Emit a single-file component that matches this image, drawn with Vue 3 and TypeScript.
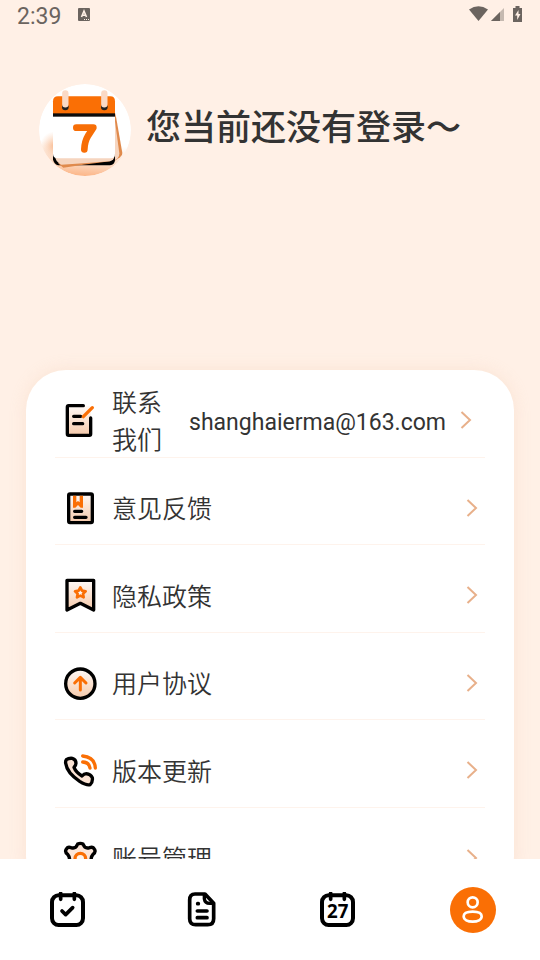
<script setup lang="ts">
import { ref } from 'vue'

interface MenuItem {
  key: string
  label: string
  value?: string
}

const menu: MenuItem[] = [
  { key: 'contact', label: '联系我们', value: 'shanghaierma@163.com' },
  { key: 'feedback', label: '意见反馈' },
  { key: 'privacy', label: '隐私政策' },
  { key: 'terms', label: '用户协议' },
  { key: 'update', label: '版本更新' },
  { key: 'account', label: '账号管理' },
]

const tabs = [
  { key: 'todo', name: '待办' },
  { key: 'notes', name: '笔记' },
  { key: 'calendar', name: '日历' },
  { key: 'me', name: '我的' },
]

const active = ref('me')
</script>

<template>
  <div class="screen">
    <header class="status">
      <span class="time">2:39</span>
      <svg class="badge" viewBox="0 0 12 13" aria-hidden="true">
        <rect width="12" height="13" rx="1" fill="#6b645f" />
        <path d="M3.500 9 6 3l2.500 6M4.300 7.200h3.400" fill="none" stroke="#fff0e6" stroke-width="1.600" />
        <path d="M6 11.500h1M8 11.500h1M10 11.500h1" stroke="#fff0e6" stroke-width="1" />
      </svg>
      <svg class="signals" viewBox="0 0 54 16" aria-hidden="true">
        <path d="M0 3.500Q9.500-3.200 19 3.500L9.500 15Z" fill="#6b645f" />
        <path d="M22 15 35 2v13Z" fill="#c5b9b0" />
        <path d="M22 15 31 6v9Z" fill="#6b645f" />
        <path d="M44 2h2.500V0h4v2H53v14h-9Z" fill="#6b645f" />
        <path d="M49.500 4 46 9.500h2.200V14L51.500 8h-2Z" fill="#fff0e6" />
      </svg>
    </header>

    <main class="content">
      <section class="profile">
        <svg class="avatar" viewBox="27 26 276 276" aria-hidden="true">
          <defs>
            <linearGradient id="av-bg" x1="0.550" y1="0" x2="0.480" y2="1">
              <stop offset="0" stop-color="#fff" />
              <stop offset="0.650" stop-color="#fff" />
              <stop offset="0.850" stop-color="#fcdcc6" />
              <stop offset="1" stop-color="#fcb688" />
            </linearGradient>
            <radialGradient id="av-side" cx="74" cy="212" r="44" gradientUnits="userSpaceOnUse">
              <stop offset="0" stop-color="#f9b98e" />
              <stop offset="1" stop-color="#fbd0b2" stop-opacity="0" />
            </radialGradient>
            <clipPath id="av-clip"><circle cx="165" cy="164" r="138" /></clipPath>
          </defs>
          <g clip-path="url(#av-clip)">
            <circle cx="165" cy="164" r="138" fill="url(#av-bg)" />
            <circle cx="74" cy="212" r="44" fill="url(#av-side)" />
          </g>
          <path d="M256 112 277 233Q278 240 270 246L246 262Z" fill="#e08a4c" />
          <path d="M252 116 268 234Q269 243 262 250L240 262Z" fill="#f6d5bf" />
          <path d="M69 236V252Q71 266 84 270H240Q254 268 255 254V236Z" fill="#000" />
          <path d="M84 264 100 277 160 268 240 258 252 246Z" fill="#e08a4c" />
          <path d="M74 240Q76 260 94 268L160 264 240 258Q252 256 254 240Z" fill="#f6d5bf" />
          <path d="M69 110H255V236Q255 249 242 249H84Q69 249 69 236Z" fill="#fff" />
          <path d="M69 116V78Q69 63 84 63H241Q255 63 255 78V116Z" fill="#fa6f05" />
          <rect x="69" y="114" width="186" height="10" fill="#0c0c0c" />
          <circle cx="106" cy="95" r="10" fill="#222" />
          <circle cx="223" cy="95" r="10" fill="#222" />
          <path d="M106 54V87M223 54V87" stroke="#fbd9c5" stroke-width="19" stroke-linecap="round" />
          <path d="M139 157H190L175 180Q164 198 163 222" fill="none" stroke="#f76e06" stroke-width="20" stroke-linecap="round" stroke-linejoin="round" />
        </svg>
        <h1 class="title">您当前还没有登录～</h1>
      </section>

      <nav class="card" aria-label="设置">
        <svg class="defs" aria-hidden="true">
          <defs>
            <linearGradient id="peach" x1="0" y1="0" x2="0" y2="1">
              <stop offset="0" stop-color="#fffaf7" />
              <stop offset="1" stop-color="#f5c9aa" />
            </linearGradient>
          </defs>
        </svg>
        <a v-for="item in menu" :key="item.key" href="#" class="row" :class="{ detailed: item.value }">
          <svg class="icon" viewBox="0 0 108 108" aria-hidden="true">
            <g fill="none" stroke="#000" stroke-width="10" stroke-linecap="round" stroke-linejoin="round">
              <template v-if="item.key === 'contact'">
                <rect x="16" y="11" width="70" height="89" rx="4" fill="url(#peach)" stroke="none" />
                <path d="M64 11H20Q16 11 16 15V96Q16 100 20 100H82Q86 100 86 96V48" />
                <path d="M35 43H56M35 65H62" />
                <path d="M64 44 91 17" stroke="#fa6f05" />
              </template>
              <template v-else-if="item.key === 'feedback'">
                <rect x="20" y="12" width="71" height="86" rx="4" fill="url(#peach)" />
                <path d="M33 17H43V37L48 33 53 37V17H63V53H56L48 45 40 53H33Z" fill="#fa6f05" stroke="none" />
                <path d="M38 64H59M38 82H72" />
              </template>
              <template v-else-if="item.key === 'privacy'">
                <path d="M15 10H95V99L55 79 15 99Z" fill="url(#peach)" />
                <path d="M55 31 60 41 71 43 63 50 65 61 55 56 45 61 47 50 39 43 50 41Z" fill="#fff4ec" stroke="#fa6f05" stroke-width="8" />
              </template>
              <template v-else-if="item.key === 'terms'">
                <circle cx="55" cy="56" r="44" fill="url(#peach)" />
                <path d="M55 75V38M38 54 55 37 72 54" stroke="#fa6f05" stroke-width="9" />
              </template>
              <template v-else-if="item.key === 'update'">
                <path d="M13 23Q20 18 31 19Q42 22 42 34Q42 40 36 46Q42 61 60 72Q66 65 73 65Q86 66 91 77Q93 90 84 98Q74 101 53 88Q15 63 11 34Q10 27 13 23Z" fill="#fbe3d4" />
                <path d="M62 30Q82 31 84 48M62 12Q98 15 100 48" stroke="#fa6f05" stroke-width="10" />
              </template>
              <template v-else>
                <path d="M47 12Q55 8 63 12Q69 28 83 23Q93 19 98 29Q102 36 93 43Q82 56 93 69Q102 76 98 83Q93 93 83 89Q69 84 63 100Q55 104 47 100Q41 84 27 89Q17 93 12 83Q8 76 17 69Q28 56 17 43Q8 36 12 29Q17 19 27 23Q41 28 47 12Z" fill="#fce6d9" />
                <circle cx="55" cy="56" r="16" fill="#fff4ec" stroke="#fa6f05" />
              </template>
            </g>
          </svg>
          <span class="label">{{ item.label }}</span>
          <span v-if="item.value" class="value">{{ item.value }}</span>
          <svg class="chevron" viewBox="0 0 12 20" aria-hidden="true">
            <path d="M1.500 2 10 10 1.500 18" fill="none" stroke="#e8b08a" stroke-width="2" />
          </svg>
        </a>
      </nav>
    </main>

    <nav class="tabs" aria-label="主导航">
      <button v-for="tab in tabs" :key="tab.key" type="button" class="tab" :aria-label="tab.name" :aria-current="active === tab.key ? 'page' : undefined" @click="active = tab.key">
        <svg v-if="tab.key === 'me'" class="me" viewBox="0 0 138 138" aria-hidden="true">
          <circle cx="69" cy="69" r="69" fill="#fa6f05" />
          <g fill="none" stroke="#fff" stroke-width="8">
            <circle cx="68" cy="46" r="15" />
            <path d="M68 74C85 74 95 78 95 88C95 98 83 104 68 104C53 104 41 98 41 88C41 78 51 74 68 74Z" />
          </g>
        </svg>
        <svg v-else class="glyph" viewBox="2 2 108 108" aria-hidden="true">
          <g fill="none" stroke="#000" stroke-width="12" stroke-linecap="round" stroke-linejoin="round">
            <template v-if="tab.key === 'notes'">
              <path d="M32 8H62L88 36V82Q88 100 70 100H34Q16 100 16 82V26Q16 8 32 8Z" stroke-width="11" />
              <path d="M60 12V22Q62 36 76 36H86" stroke-width="10" />
              <path d="M40 37H42M39 59H68M39 79H68" stroke-width="11" />
            </template>
            <template v-else>
              <rect x="8" y="12" width="93" height="89" rx="20" />
              <path d="M34 6V24M75 6V24" stroke-width="11" />
              <path v-if="tab.key === 'todo'" d="M38 59 49 70 70 49" stroke-width="11" />
            </template>
          </g>
          <text v-if="tab.key === 'calendar'" class="day" x="55" y="80">27</text>
        </svg>
      </button>
    </nav>
  </div>
</template>

<style>
body {
  margin: 0;
}
</style>

<style scoped>
.screen {
  display: flex;
  flex-direction: column;
  height: 100vh;
  background: #fff0e6;
  color: #333;
  font-family: Roboto, "Noto Sans CJK SC", sans-serif;
}

.status {
  display: flex;
  align-items: center;
  height: 32px;
  padding: 0 17px;
  color: #6b645f;
}

.time {
  font-size: 23px;
  line-height: 28px;
  padding-top: 2px;
}

.badge {
  width: 12px;
  height: 13px;
  margin: 0 auto 3px 17px;
}

.signals {
  width: 54px;
  height: 16px;
  margin-bottom: 4px;
}

.content {
  flex: 1;
  min-height: 0;
  padding: 0 26px;
  overflow-y: auto;
  scrollbar-width: none;
}

.profile {
  display: flex;
  align-items: flex-start;
  gap: 15px;
  height: 286px;
  padding: 52px 0 0 13px;
}

.avatar {
  flex: none;
  width: 92px;
  height: 92px;
}

.title {
  margin: 0;
  font-size: 35px;
  font-weight: 500;
  line-height: 90px;
  white-space: nowrap;
}

.card {
  display: grid;
  grid-template-rows: repeat(6, minmax(0, 1fr));
  height: 525px;
  padding: 0 29px;
  border-radius: 40px;
  background: #fff;
  box-shadow: 0 0 16px rgba(240, 200, 170, 0.3);
}

.defs {
  position: absolute;
  width: 0;
  height: 0;
}

.row {
  display: flex;
  align-items: center;
  padding: 14px 7px 0;
  border-bottom: 1px solid #fef3ec;
  color: inherit;
  text-decoration: none;
}

.row.detailed {
  padding-right: 13px;
}

.icon {
  flex: none;
  width: 36px;
  height: 36px;
  margin-right: 14px;
}

.label,
.value {
  line-height: 37px;
}

.label {
  flex: 1;
  font-family: "Noto Sans CJK SC", sans-serif;
  font-size: 25px;
  font-weight: 350;
}

.value {
  margin: 0 14px 0 24px;
  padding-top: 4px;
  font-size: 23px;
}

.chevron {
  flex: none;
  width: 12px;
  height: 20px;
}

.tabs {
  display: grid;
  grid-template-columns: repeat(4, 1fr);
  height: 101px;
  background: #fff;
}

.tab {
  display: flex;
  align-items: center;
  justify-content: center;
  padding: 0;
  border: 0;
  background: none;
  cursor: pointer;
}

.glyph {
  width: 36px;
  height: 36px;
}

.me {
  width: 46px;
  height: 46px;
}

.day {
  font-family: "Open Sans", sans-serif;
  font-size: 56px;
  font-weight: 700;
  text-anchor: middle;
}
</style>
